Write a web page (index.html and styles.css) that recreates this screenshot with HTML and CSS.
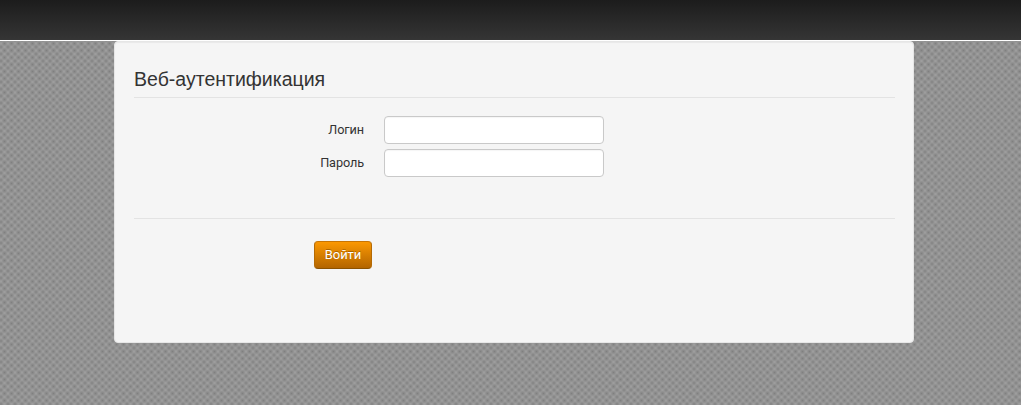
FILE: index.html
```html
<!DOCTYPE html>
<html lang="ru">
<head>
<meta charset="utf-8">
<title>Веб-аутентификация</title>
<link rel="stylesheet" href="styles.css">
</head>
<body>
<header class="navbar"></header>
<main class="well">
  <form>
    <h1 class="legend">Веб-аутентификация</h1>
    <div class="control-group">
      <label for="login">Логин</label>
      <input id="login" type="text">
    </div>
    <div class="control-group">
      <label for="password">Пароль</label>
      <input id="password" type="password">
    </div>
    <div class="form-actions">
      <button class="btn" type="button">Войти</button>
    </div>
  </form>
</main>
</body>
</html>
```
FILE: styles.css
```css
* { box-sizing: border-box; }
body {
  margin: 0;
  height: 405px;
  overflow: hidden;
  font: 13px/18px Roboto, "Liberation Sans", sans-serif;
  color: #333;
  background-color: #9d9d9d;
  background-image:
    radial-gradient(ellipse at center, rgba(112, 112, 112, .65) 0, rgba(125, 125, 125, 0) 3px),
    radial-gradient(ellipse at center, rgba(112, 112, 112, .65) 0, rgba(125, 125, 125, 0) 3px);
  background-size: 7px 7px;
  background-position: 1px 40px, 4.5px 43.5px;
}
.navbar {
  height: 41px;
  background: linear-gradient(#1c1c1c, #353535);
  border-bottom: 1px solid #fff;
}
.well {
  width: 800px;
  height: 302px;
  margin-left: 114px;
  padding: 26px 18px 0 19px;
  background: #f5f5f5;
  border: 1px solid #e6e6e6;
  border-radius: 4px;
  box-shadow: inset 0 1px 1px rgba(0, 0, 0, .05);
}
.legend {
  height: 30px;
  margin: 0 0 18px;
  font: 400 19.5px/22px "Liberation Sans", Arial, sans-serif;
  border-bottom: 1px solid #e3e3e3;
}
.control-group {
  display: flex;
  align-items: center;
  gap: 20px;
  margin-bottom: 5px;
}
.control-group label {
  width: 230px;
  font-size: 12.7px;
  letter-spacing: -.1px;
  text-align: right;
}
.control-group input {
  width: 220px;
  height: 28px;
  padding: 4px;
  border: 1px solid #c9c9c9;
  border-radius: 4px;
  background: #fff;
  box-shadow: inset 0 1px 1px rgba(0, 0, 0, .04);
}
.form-actions {
  margin-top: 41px;
  padding: 22px 0 0 180px;
  border-top: 1px solid #e3e3e3;
}
.btn {
  display: block;
  width: 58px;
  height: 28px;
  padding: 0;
  font: 13px/18px Roboto, "Liberation Sans", sans-serif;
  letter-spacing: -.1px;
  color: #fff;
  text-shadow: 0 -1px 0 rgba(0, 0, 0, .25);
  background: linear-gradient(#fb9802, #b36500);
  border: 1px solid;
  border-color: #c87504 #b46a04 #8c5200;
  border-radius: 4px;
}
```
